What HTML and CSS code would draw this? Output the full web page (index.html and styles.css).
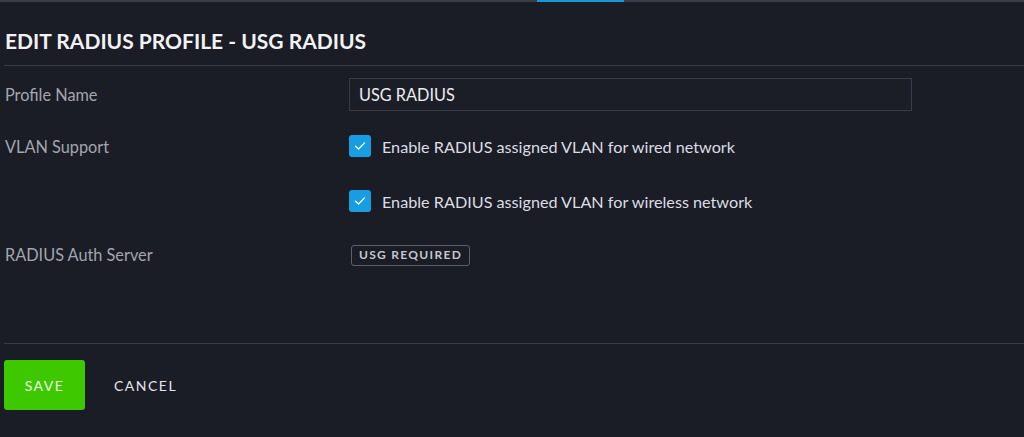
FILE: index.html
```html
<!DOCTYPE html>
<html lang="en">
<head>
    <meta charset="UTF-8" />
    <meta name="viewport" content="width=device-width, initial-scale=1.0" />
    <title>Edit RADIUS Profile</title>
    <link rel="stylesheet" href="styles.css">
</head>
<body>
    <div class="tab-bar">
        <div class="tab-active"></div>
    </div>

    <div class="panel">
        <h1 class="title">EDIT RADIUS PROFILE - USG RADIUS</h1>

        <div class="form">
            <div class="row row-name">
                <label class="label" for="profile-name">Profile Name</label>
                <input class="text-input" type="text" id="profile-name" value="USG RADIUS" />
            </div>

            <div class="row row-vlan">
                <div class="label">VLAN Support</div>
                <label class="check">
                    <span class="box">
                        <svg width="12" height="10" viewBox="0 0 12 10"><path d="M1.5 5.2 L4.6 8 L10.5 1.8" fill="none" stroke="#fff" stroke-width="1.2" stroke-linecap="round" stroke-linejoin="round"/></svg>
                    </span>
                    Enable RADIUS assigned VLAN for wired network
                </label>
            </div>

            <div class="row row-vlan2">
                <div class="label"></div>
                <label class="check">
                    <span class="box">
                        <svg width="12" height="10" viewBox="0 0 12 10"><path d="M1.5 5.2 L4.6 8 L10.5 1.8" fill="none" stroke="#fff" stroke-width="1.2" stroke-linecap="round" stroke-linejoin="round"/></svg>
                    </span>
                    Enable RADIUS assigned VLAN for wireless network
                </label>
            </div>

            <div class="row row-auth">
                <div class="label">RADIUS Auth Server</div>
                <div><span class="badge">USG REQUIRED</span></div>
            </div>
        </div>

        <div class="actions">
            <button class="btn-save" type="button">SAVE</button>
            <button class="btn-cancel" type="button">CANCEL</button>
        </div>
    </div>
</body>
</html>
```

FILE: styles.css
```css
body {
    margin: 0;
    padding: 0;
    background-color: #1a1c26;
    font-family: Lato, 'Open Sans', sans-serif;
    color: #d9dbe0;
}
.tab-bar {
    height: 2px;
    background-color: #3a3d47;
}
.tab-active {
    margin-left: 537px;
    width: 87px;
    height: 2px;
    background-color: #1798d9;
}
.panel {
    padding-left: 4px;
}
.title {
    margin: 0;
    padding: 27px 0 12px 1px;
    font-size: 21px;
    line-height: 24px;
    font-weight: 700;
    color: #f2f2f4;
    border-bottom: 1px solid #393c47;
}
.form {
    padding-top: 12px;
    height: 265px;
    border-bottom: 1px solid #393c47;
}
.row {
    display: grid;
    grid-template-columns: 345px 563px;
    align-items: center;
}
.label {
    padding-left: 1px;
    padding-bottom: 1px;
    font-size: 16.3px;
    color: #a3a6ae;
}
.row-name {
    height: 33px;
}
.row-vlan {
    margin-top: 24px;
    height: 22px;
}
.row-vlan2 {
    margin-top: 33px;
    height: 22px;
}
.row-auth {
    margin-top: 31px;
    height: 21px;
}
.text-input {
    box-sizing: border-box;
    width: 563px;
    height: 33px;
    padding: 0 9px 1px;
    background-color: #1b1d27;
    border: 1px solid #393c47;
    color: #eceef1;
    font-family: Lato, 'Open Sans', sans-serif;
    font-size: 16.3px;
    outline: none;
}
.check {
    display: flex;
    align-items: center;
    gap: 11px;
    padding-bottom: 1px;
    font-size: 16.2px;
    color: #dcdee3;
}
.box {
    width: 22px;
    height: 22px;
    border-radius: 3px;
    background-color: #189de0;
    display: flex;
    align-items: center;
    justify-content: center;
}
.badge {
    display: inline-block;
    box-sizing: border-box;
    height: 21px;
    margin-left: 2px;
    padding: 0 7px;
    border: 1.5px solid #5d6069;
    border-radius: 3px;
    font-size: 12px;
    line-height: 18px;
    font-weight: 700;
    letter-spacing: 1.3px;
    color: #c6c8ce;
}
.actions {
    display: flex;
    align-items: center;
    padding-top: 16px;
}
.btn-save {
    width: 81px;
    height: 50px;
    border: none;
    border-radius: 3px;
    background-color: #3ec800;
    color: #eef6ea;
    font-family: Lato, 'Open Sans', sans-serif;
    font-size: 14px;
    letter-spacing: 1.5px;
    cursor: pointer;
}
.btn-cancel {
    margin-left: 29px;
    padding: 0;
    border: none;
    background: none;
    color: #e3e5e9;
    font-family: Lato, 'Open Sans', sans-serif;
    font-size: 14px;
    letter-spacing: 1.5px;
    cursor: pointer;
}
```
